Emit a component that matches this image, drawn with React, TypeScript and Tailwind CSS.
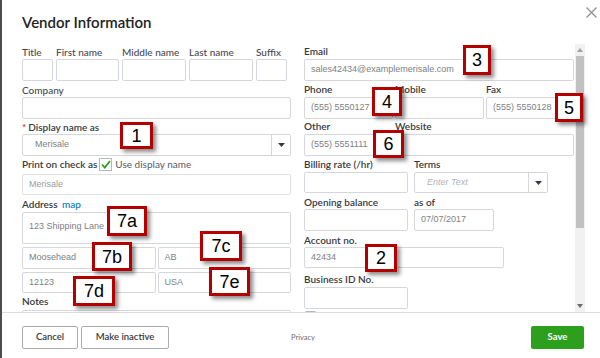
import React from "react";

const lbl = "block h-[12px] leading-[12px] text-[10px] font-semibold text-[#393a3d] whitespace-nowrap";
const lblLight = "block h-[12px] leading-[12px] text-[10px] font-medium text-[#4a4b4f] whitespace-nowrap";
const box = "border border-[#d4d7dc] rounded-[2px] bg-white flex items-center pl-[6px] text-[9px] text-[#7d7f84] font-['Liberation_Sans',sans-serif] whitespace-nowrap overflow-hidden";

function Caret() {
  return (
    <svg width="7" height="4" viewBox="0 0 7 4">
      <path d="M0 0 L7 0 L3.5 4 Z" fill="#393a3d" />
    </svg>
  );
}

function Callout({ label, className }: { label: string; className: string }) {
  return (
    <div
      className={
        "absolute bg-white border-[3px] border-[#b30000] flex items-center justify-center text-[18px] leading-none text-black font-['Liberation_Sans',sans-serif] shadow-[3px_3px_4px_rgba(0,0,0,0.45)] " +
        className
      }
    >
      {label}
    </div>
  );
}

export default function App() {
  return (
    <div className="relative w-[600px] h-[358px] bg-white overflow-hidden border-l-2 border-[#4d4d4d] font-['Lato',sans-serif]">
      {/* Header */}
      <div className="h-[44px] flex items-start justify-between pl-[20px] pr-[3px]">
        <h1 className="pt-[12px] text-[15px] leading-[20px] font-semibold text-[#222]">Vendor Information</h1>
        <svg width="11" height="11" viewBox="0 0 11 11" className="mt-[7px]">
          <path d="M0.5 0.5 L10.5 10.5 M10.5 0.5 L0.5 10.5" stroke="#8d9096" strokeWidth="1.3" />
        </svg>
      </div>

      {/* Body */}
      <div className="h-[269px] flex items-start border-b border-[#dcdcdc] overflow-hidden pl-[20px]">
        {/* Left column */}
        <div className="w-[269px] pt-[2px] shrink-0">
          <div className="flex gap-[3px]">
            <div className="w-[31px]"><span className={lblLight}>Title</span><div className={box + " h-[22px] mt-[1px]"}></div></div>
            <div className="w-[63px]"><span className={lblLight}>First name</span><div className={box + " h-[22px] mt-[1px]"}></div></div>
            <div className="w-[64px]"><span className={lblLight}>Middle name</span><div className={box + " h-[22px] mt-[1px]"}></div></div>
            <div className="w-[64px]"><span className={lblLight}>Last name</span><div className={box + " h-[22px] mt-[1px]"}></div></div>
            <div className="w-[31px]"><span className={lblLight}>Suffix</span><div className={box + " h-[22px] mt-[1px]"}></div></div>
          </div>
          <span className={lblLight + " mt-[3px]"}>Company</span>
          <div className={box + " h-[22px] mt-[1px]"}></div>

          <span className={lbl + " mt-[2px]"}><span className="text-[#d52b1e] mr-[2px]">*</span>Display name as</span>
          <div className={box + " h-[22px] mt-[1px] pl-0"}>
            <span className="flex-1 pl-[6px]">Merisale</span>
            <div className="w-[19px] h-full border-l border-[#d4d7dc] flex items-center justify-center"><Caret /></div>
          </div>

          <div className="h-[16px] flex items-center">
            <span className="text-[10px] font-semibold text-[#393a3d]">Print on check as</span>
            <div className="ml-[2px] w-[13px] h-[13px] border border-[#b5b8bd] bg-white flex items-center justify-center">
              <svg width="10" height="9" viewBox="0 0 10 9">
                <path d="M1 4.5 L3.8 7.5 L9 1" stroke="#2ca01c" strokeWidth="1.8" fill="none" />
              </svg>
            </div>
            <span className="ml-[3px] text-[10px] text-[#5a5b60]">Use display name</span>
          </div>
          <div className={box + " h-[21px] mt-[2px] bg-[#ececec] border-[#e0e0e0] text-[#9a9ca0]"}>Merisale</div>

          <span className={lbl + " mt-[3px]"}>Address <span className="text-[#0077c5] font-medium ml-[2px]">map</span></span>
          <div className={box + " h-[32px] mt-[2px] items-start pt-[7px]"}>123 Shipping Lane</div>
          <div className="flex gap-[2px] mt-[3px]">
            <div className={box + " h-[22px] flex-1"}>Moosehead</div>
            <div className={box + " h-[22px] flex-1"}>AB</div>
          </div>
          <div className="flex gap-[2px] mt-[3px]">
            <div className={box + " h-[21px] flex-1"}>12123</div>
            <div className={box + " h-[21px] flex-1"}>USA</div>
          </div>
          <span className={lbl + " mt-[2px]"}>Notes</span>
          <div className={box + " h-[40px] mt-[3px]"}></div>
        </div>

        {/* Right column */}
        <div className="w-[270px] ml-[13px] pt-[1px] shrink-0">
          <span className={lbl}>Email</span>
          <div className={box + " h-[22px] mt-[2px]"}>sales42434@examplemerisale.com</div>

          <div className="flex gap-[2px] mt-[2px]">
            <div className="w-[89px]"><span className={lbl}>Phone</span><div className={box + " h-[22px] mt-[2px]"}>(555) 5550127</div></div>
            <div className="w-[89px]"><span className={lbl}>Mobile</span><div className={box + " h-[22px] mt-[2px]"}></div></div>
            <div className="w-[88px]"><span className={lbl}>Fax</span><div className={box + " h-[22px] mt-[2px]"}>(555) 5550128</div></div>
          </div>

          <div className="flex gap-[3px] mt-[1px]">
            <div className="w-[88px]"><span className={lbl}>Other</span><div className={box + " h-[22px] mt-[2px]"}>(555) 5551111</div></div>
            <div className="flex-1"><span className={lbl}>Website</span><div className={box + " h-[22px] mt-[2px] w-[179px]"}></div></div>
          </div>

          <div className="flex gap-[6px] mt-[2px]">
            <div className="w-[104px]"><span className={lbl}>Billing rate (/hr)</span><div className={box + " h-[21px] mt-[2px]"}></div></div>
            <div className="w-[134px]">
              <span className={lbl}>Terms</span>
              <div className={box + " h-[21px] mt-[2px] pl-0"}>
                <span className="flex-1 pl-[6px] italic text-[#b0b3b8]">Enter Text</span>
                <div className="w-[19px] h-full border-l border-[#d4d7dc] flex items-center justify-center"><Caret /></div>
              </div>
            </div>
          </div>

          <div className="flex gap-[6px] mt-[3px]">
            <div className="w-[104px]"><span className={lbl}>Opening balance</span><div className={box + " h-[22px] mt-[1px]"}></div></div>
            <div className="w-[80px]"><span className={lbl}>as of</span><div className={box + " h-[22px] mt-[1px]"}>07/07/2017</div></div>
          </div>

          <span className={lbl + " mt-[3px]"}>Account no.</span>
          <div className={box + " h-[21px] mt-[1px] w-[200px]"}>42434</div>

          <span className={lbl + " mt-[5px]"}>Business ID No.</span>
          <div className={box + " h-[22px] mt-[2px] w-[104px]"}></div>
          <div className="w-[11px] h-[11px] border border-[#b5b8bd] rounded-[1px] mt-[2px] ml-[1px]"></div>
        </div>

        {/* Scrollbar */}
        <div className="w-[10px] h-full ml-[1px] bg-[#f1f1f1] flex flex-col items-center shrink-0">
          <div className="h-[12px] flex items-center justify-center">
            <svg width="6" height="4" viewBox="0 0 6 4"><path d="M0 4 L6 4 L3 0 Z" fill="#a3a3a3" /></svg>
          </div>
          <div className="w-[8px] h-[172px] bg-[#c1c1c1]"></div>
          <div className="flex-1"></div>
          <div className="h-[12px] flex items-center justify-center">
            <svg width="6" height="4" viewBox="0 0 6 4"><path d="M0 0 L6 0 L3 4 Z" fill="#6b6b6b" /></svg>
          </div>
        </div>
      </div>

      {/* Footer */}
      <div className="grid grid-cols-[1fr_auto_1fr] items-center pl-[20px] pr-[16px] pt-[13px]">
        <div className="flex gap-[3px] justify-self-start">
          <button className="w-[56px] h-[23px] border border-[#a9acb1] rounded-[2px] text-[9.5px] font-semibold text-[#393a3d]">Cancel</button>
          <button className="w-[88px] h-[23px] border border-[#a9acb1] rounded-[2px] text-[9.5px] font-semibold text-[#393a3d]">Make inactive</button>
        </div>
        <span className="text-[7.5px] text-[#6b6c72]">Privacy</span>
        <button className="justify-self-end w-[53px] h-[23px] rounded-[2px] bg-[#2ca01c] text-white text-[9.5px] font-bold">Save</button>
      </div>

      {/* Callouts */}
      <Callout label="3" className="left-[461px] top-[45px] w-[28px] h-[30px]" />
      <Callout label="4" className="left-[370px] top-[87px] w-[30px] h-[29px]" />
      <Callout label="5" className="left-[553px] top-[93px] w-[28px] h-[29px]" />
      <Callout label="1" className="left-[118px] top-[122px] w-[33px] h-[27px]" />
      <Callout label="6" className="left-[371px] top-[130px] w-[31px] h-[28px]" />
      <Callout label="7a" className="left-[105px] top-[206px] w-[40px] h-[30px]" />
      <Callout label="7c" className="left-[198px] top-[231px] w-[42px] h-[30px]" />
      <Callout label="2" className="left-[363px] top-[244px] w-[32px] h-[28px]" />
      <Callout label="7b" className="left-[90px] top-[242px] w-[40px] h-[29px]" />
      <Callout label="7e" className="left-[207px] top-[267px] w-[41px] h-[29px]" />
      <Callout label="7d" className="left-[71px] top-[276px] w-[42px] h-[30px]" />
    </div>
  );
}
